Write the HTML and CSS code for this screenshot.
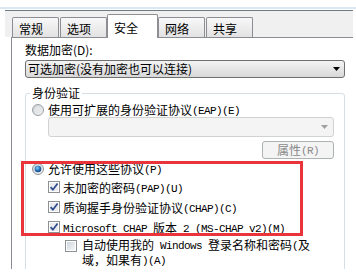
FILE: index.html
```html
<!DOCTYPE html>
<html lang="zh-CN">
<head>
    <meta charset="UTF-8">
    <meta name="viewport" content="width=device-width, initial-scale=1.0">
    <title>安全</title>
    <link rel="stylesheet" href="styles.css">
</head>
<body>
    <div class="window">
        <div class="topline"></div>
        <div class="dialog">
            <div class="strip">
                <div class="tab">常规</div>
                <div class="tab">选项</div>
                <div class="tab active">安全</div>
                <div class="tab">网络</div>
                <div class="tab">共享</div>
            </div>
            <div class="panel">
                <div class="field-label">数据加密(D):</div>
                <div class="select">
                    <span>可选加密(没有加密也可以连接)</span>
                    <svg class="arrow" width="7" height="4" viewBox="0 0 7 4"><polygon points="0,0 7,0 3.5,4" fill="#000"/></svg>
                </div>
                <fieldset class="group">
                    <legend>身份验证</legend>
                    <div class="opt">
                        <svg class="radio" width="12" height="12" viewBox="0 0 12 12">
                            <defs><linearGradient id="rg1" x1="0" y1="0" x2="1" y2="1"><stop offset="0" stop-color="#c9cdd0"/><stop offset="1" stop-color="#f7f7f7"/></linearGradient></defs>
                            <circle cx="6" cy="6" r="5.5" fill="url(#rg1)" stroke="#9aa1a6"/>
                            <circle cx="6" cy="6" r="3.2" fill="#e4e6e8"/>
                        </svg>
                        <span>使用可扩展的身份验证协议<span class="en">(EAP)(E)</span></span>
                    </div>
                    <div class="eap">
                        <div class="combo">
                            <svg class="arrow" width="7" height="4" viewBox="0 0 7 4"><polygon points="0,0 7,0 3.5,4" fill="#a0a0a0"/></svg>
                        </div>
                        <div class="btn-row"><button disabled>属性<span class="en">(R)</span></button></div>
                    </div>
                    <div class="opt on">
                        <svg class="radio" width="12" height="12" viewBox="0 0 12 12">
                            <defs>
                                <linearGradient id="rg2" x1="0" y1="0" x2="1" y2="1"><stop offset="0" stop-color="#c9cdd0"/><stop offset="1" stop-color="#f7f7f7"/></linearGradient>
                                <radialGradient id="dot" cx="0.4" cy="0.35" r="0.7"><stop offset="0" stop-color="#8fd2f7"/><stop offset="0.5" stop-color="#2a7ac4"/><stop offset="1" stop-color="#123e7a"/></radialGradient>
                            </defs>
                            <circle cx="6" cy="6" r="5.5" fill="url(#rg2)" stroke="#8c959c"/>
                            <circle cx="6" cy="6" r="3.3" fill="url(#dot)"/>
                        </svg>
                        <span>允许使用这些协议<span class="en">(P)</span></span>
                    </div>
                    <div class="checks">
                        <div class="check-row">
                            <svg class="check" width="12" height="12" viewBox="0 0 12 12">
                                <rect x="0.5" y="0.5" width="11" height="11" fill="#fff" stroke="#8e9194"/>
                                <rect x="2" y="2" width="8" height="8" fill="#e8eaee"/>
                                <path d="M2.6 6.2 L4.9 8.7 L9.6 2.6" fill="none" stroke="#2e4a8e" stroke-width="1.7"/>
                            </svg>
                            <span>未加密的密码<span class="en">(PAP)(U)</span></span>
                        </div>
                        <div class="check-row">
                            <svg class="check" width="12" height="12" viewBox="0 0 12 12">
                                <rect x="0.5" y="0.5" width="11" height="11" fill="#fff" stroke="#8e9194"/>
                                <rect x="2" y="2" width="8" height="8" fill="#e8eaee"/>
                                <path d="M2.6 6.2 L4.9 8.7 L9.6 2.6" fill="none" stroke="#2e4a8e" stroke-width="1.7"/>
                            </svg>
                            <span>质询握手身份验证协议<span class="en">(CHAP)(C)</span></span>
                        </div>
                        <div class="check-row">
                            <svg class="check" width="12" height="12" viewBox="0 0 12 12">
                                <rect x="0.5" y="0.5" width="11" height="11" fill="#fff" stroke="#8e9194"/>
                                <rect x="2" y="2" width="8" height="8" fill="#e8eaee"/>
                                <path d="M2.6 6.2 L4.9 8.7 L9.6 2.6" fill="none" stroke="#2e4a8e" stroke-width="1.7"/>
                            </svg>
                            <span><span class="en">Microsoft CHAP </span>版本<span class="en"> 2 (MS-CHAP v2)(M)</span></span>
                        </div>
                    </div>
                    <div class="check-row sub">
                        <svg class="check" width="12" height="12" viewBox="0 0 12 12">
                            <defs><linearGradient id="cg" x1="0" y1="0" x2="1" y2="1"><stop offset="0" stop-color="#cfd6df"/><stop offset="1" stop-color="#f4f6f8"/></linearGradient></defs>
                            <rect x="0.5" y="0.5" width="11" height="11" fill="#fff" stroke="#8e9194"/>
                            <rect x="2" y="2" width="8" height="8" fill="url(#cg)"/>
                        </svg>
                        <span>自动使用我的<span class="en"> Windows </span>登录名称和密码<span class="en">(</span>及<br>域，如果有<span class="en">)(A)</span></span>
                    </div>
                </fieldset>
            </div>
        </div>
        <div class="mark"></div>
    </div>
</body>
</html>
```

FILE: styles.css
```css
body {
    margin: 0;
    background: #fff;
    font-family: "Noto Sans CJK SC", sans-serif;
    font-size: 12px;
    color: #000;
}
.window {
    position: relative;
    width: 356px;
    height: 274px;
    padding-top: 7px;
    box-sizing: border-box;
}
.topline {
    height: 2px;
    background: #dae7f5;
}
.dialog {
    margin: 1px 3px 0 5px;
}
.strip {
    display: flex;
    align-items: flex-end;
    gap: 1px;
    height: 26px;
    padding-left: 7px;
    border-top: 1px solid #6f7c88;
    background: #f0f0f0;
}
.tab {
    box-sizing: border-box;
    height: 20px;
    padding: 3px 15px 0 6px;
    line-height: 16px;
    border: 1px solid #8c8e94;
    border-bottom: none;
    border-radius: 2px 2px 0 0;
    background: linear-gradient(#f8f8f8, #e2e2e2);
}
.tab.active {
    position: relative;
    z-index: 1;
    height: 24px;
    margin: 0 -1px -1px;
    padding: 5px 19px 0 6px;
    background: #fff;
}
.panel {
    box-sizing: border-box;
    height: 232px;
    margin-left: 6px;
    padding: 4px 0 0 13px;
    border-top: 1px solid #898c95;
    border-left: 1px solid #898c95;
    background: #fff;
    overflow: hidden;
}
.field-label {
    line-height: 16px;
}
.select {
    display: flex;
    align-items: center;
    justify-content: space-between;
    box-sizing: border-box;
    width: 320px;
    height: 18px;
    margin-top: 2px;
    padding: 0 4px 0 2px;
    border: 1px solid #707070;
    border-radius: 3px;
    background: linear-gradient(#f3f3f3, #e6e6e6 50%, #d8d8d8);
    line-height: 16px;
}
.group {
    box-sizing: border-box;
    width: 320px;
    height: 200px;
    margin: 8px 0 0;
    padding: 3px 0 0 6px;
    min-width: 0;
    border: 1px solid #d5dfe5;
    border-radius: 3px;
}
.group legend {
    margin-left: -2px;
    padding: 0 2px;
    line-height: 14px;
}
.en {
    font-family: "Liberation Mono", monospace;
    font-size: 11px;
    letter-spacing: -0.6px;
    vertical-align: 1px;
}
.opt {
    display: flex;
    align-items: center;
    gap: 4px;
    height: 14px;
    line-height: 14px;
}
.opt.on {
    height: 16px;
    margin-top: 2px;
}
.eap {
    width: 286px;
    margin-left: 16px;
}
.combo {
    display: flex;
    align-items: center;
    justify-content: flex-end;
    box-sizing: border-box;
    height: 20px;
    padding-right: 5px;
    border: 1px solid #d2d2d2;
    border-radius: 3px;
    background: #f4f4f4;
}
.btn-row {
    display: flex;
    justify-content: flex-end;
    margin-top: 4px;
}
button {
    box-sizing: border-box;
    width: 72px;
    height: 18px;
    padding: 0;
    border: 1px solid #adb2b5;
    border-radius: 3px;
    background: #f4f4f4;
    color: #8a8a8a;
    font-family: "Noto Sans CJK SC", sans-serif;
    font-size: 12px;
    line-height: 16px;
}
.checks {
    margin-left: 16px;
}
.check-row {
    display: flex;
    align-items: center;
    gap: 3px;
    height: 20px;
}
.check {
    flex: none;
}
.check-row.sub {
    align-items: flex-start;
    gap: 5px;
    height: auto;
    margin: 1px 0 0 33px;
    line-height: 14px;
}
.check-row.sub .check {
    margin-top: 2px;
}
.mark {
    position: absolute;
    left: 21px;
    top: 161px;
    width: 276px;
    height: 69px;
    border: 3px solid #e8343a;
}
```
